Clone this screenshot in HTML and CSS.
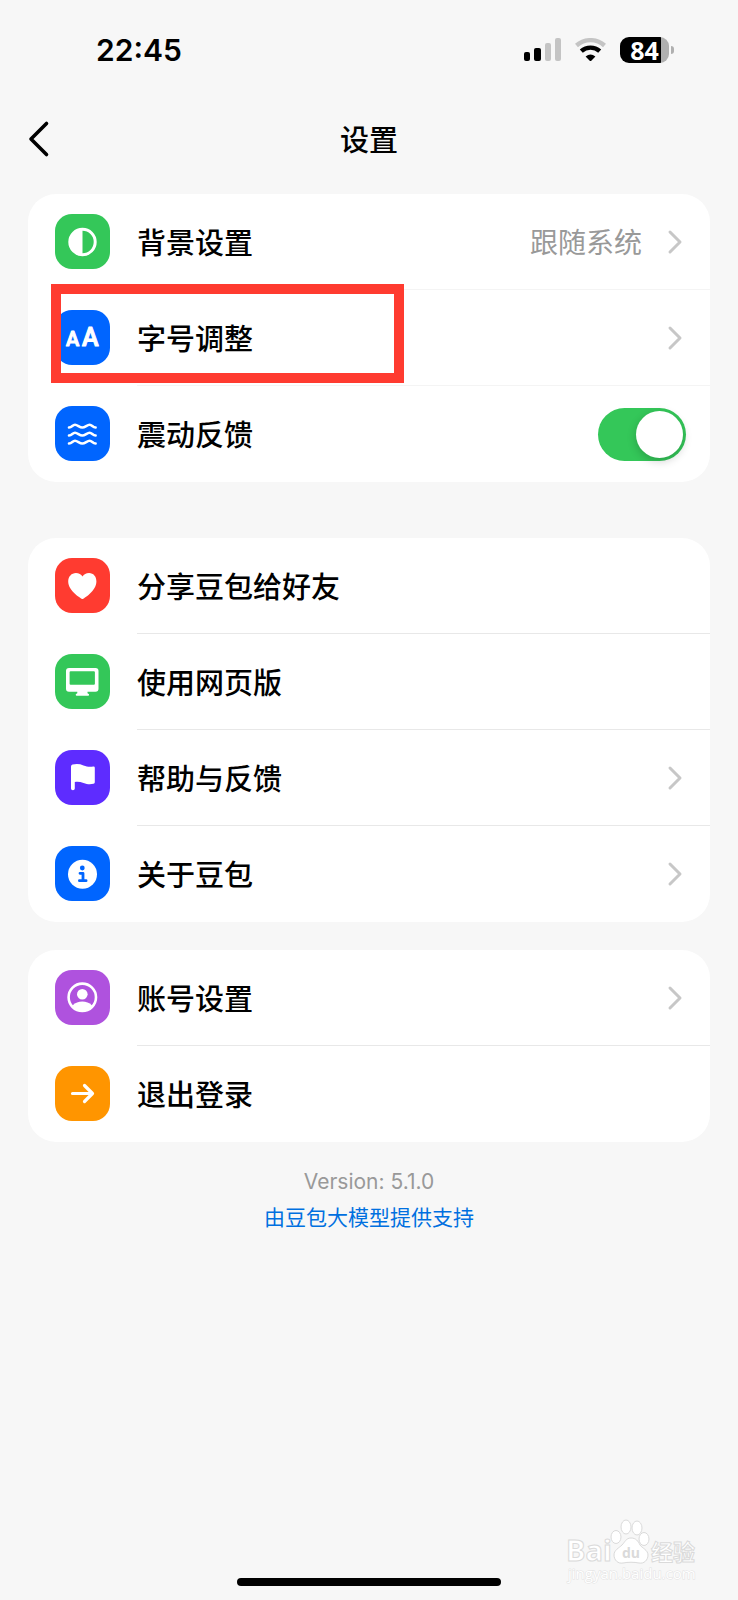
FILE: index.html
```html
<!DOCTYPE html>
<html lang="zh-CN">
<head>
<meta charset="UTF-8">
<meta name="viewport" content="width=device-width, initial-scale=1">
<title>设置</title>
<link rel="stylesheet" href="styles.css">
</head>
<body>
<div class="status-bar">
  <span class="time">22:45</span>
  <div class="status-icons">
    <svg class="signal" width="38" height="24" viewBox="0 0 38 24">
      <rect x="0" y="14" width="6" height="9" rx="2"/>
      <rect x="10" y="10" width="7" height="13" rx="2"/>
      <rect x="21" y="5" width="6" height="18" rx="2" fill="#c4c4c4"/>
      <rect x="31" y="0" width="6" height="23" rx="2" fill="#c4c4c4"/>
    </svg>
    <svg class="wifi" width="34" height="24" viewBox="0 0 34 24">
      <path d="M2.500 7.500a21 21 0 0 1 28 0" fill="none" stroke="#c4c4c4" stroke-width="4.400"/>
      <path d="M7.300 13.200a13.500 13.500 0 0 1 18.400 0" fill="none" stroke="#000" stroke-width="4.400"/>
      <path d="M11.600 18.400a8 8 0 0 1 9.800 0l-4.100 4.300q-.8.8-1.600 0z"/>
    </svg>
    <div class="battery"><span class="level">84</span></div>
  </div>
</div>

<header class="nav">
  <button class="back" aria-label="返回">
    <svg width="24" height="40" viewBox="0 0 24 40"><path d="M18.500 4.500L3 20l15.500 15.500" fill="none" stroke="#000" stroke-width="3.600" stroke-linecap="round" stroke-linejoin="round"/></svg>
  </button>
  <h1>设置</h1>
</header>

<main>
  <section class="card light">
    <button class="row">
      <span class="icon green">
        <svg viewBox="0 0 55 55"><circle cx="27.500" cy="28" r="12.700" fill="none" stroke="#fff" stroke-width="3"/><path d="M27.500 15a13 13 0 0 0 0 26z"/></svg>
      </span>
      <span class="content"><span class="label">背景设置</span><span class="value">跟随系统</span><svg class="arrow" viewBox="0 0 20 28"><path d="M4 4l10 10L4 24"/></svg></span>
    </button>
    <button class="row marked">
      <span class="icon blue">
        <svg viewBox="0 0 55 55"><g class="letters"><text x="11" y="36" font-size="20">A</text><text x="27" y="36" font-size="25">A</text></g></svg>
      </span>
      <span class="content"><span class="label">字号调整</span><svg class="arrow" viewBox="0 0 20 28"><path d="M4 4l10 10L4 24"/></svg></span>
    </button>
    <label class="row">
      <span class="icon blue">
        <svg viewBox="0 0 55 55">
          <g fill="none" stroke="#fff" stroke-width="2.600" stroke-linecap="round" stroke-linejoin="round">
            <path d="M14 21.500c3 0 3.500-2.800 6-2.800s4.500 2.800 7.300 2.800 4.800-2.800 7.300-2.800 3 2.800 6 2.800"/>
            <path d="M14 29.500c3 0 3.500-2.800 6-2.800s4.500 2.800 7.300 2.800 4.800-2.800 7.300-2.800 3 2.800 6 2.800"/>
            <path d="M14 37.500c3 0 3.500-2.800 6-2.800s4.500 2.800 7.300 2.800 4.800-2.800 7.300-2.800 3 2.800 6 2.800"/>
          </g>
        </svg>
      </span>
      <span class="content"><span class="label">震动反馈</span><input type="checkbox" class="switch" checked></span>
    </label>
  </section>

  <section class="card gap-large">
    <button class="row">
      <span class="icon red">
        <svg viewBox="0 0 55 55"><path d="M27.500 41c-1 0-14.300-8-14.300-17.500 0-5 3.400-8.500 7.700-8.500 3 0 5.200 1.500 6.600 3.500 1.400-2 3.600-3.500 6.600-3.500 4.300 0 7.300 3.500 7.300 8.500C41.400 33 28.500 41 27.500 41z"/></svg>
      </span>
      <span class="content"><span class="label">分享豆包给好友</span></span>
    </button>
    <button class="row">
      <span class="icon green">
        <svg viewBox="0 0 55 55"><path fill-rule="evenodd" d="M14 14h26.500a3 3 0 0 1 3 3v17.700a3 3 0 0 1-3 3h-8v1.500l1.200.8a1 1 0 0 1-.5 1.800H21.600a1 1 0 0 1-.5-1.800l1.200-.8v-1.500H14a3 3 0 0 1-3-3V17a3 3 0 0 1 3-3zm1.600 3.300a1 1 0 0 0-1 1v11.400a1 1 0 0 0 1 1h23.300a1 1 0 0 0 1-1V18.300a1 1 0 0 0-1-1z"/></svg>
      </span>
      <span class="content"><span class="label">使用网页版</span></span>
    </button>
    <button class="row">
      <span class="icon purple">
        <svg viewBox="0 0 55 55"><path d="M16 16.500q0-1.500 1.500-1.900c4-.9 7.500-.6 11 .9 3.500 1.400 6.500 1.700 9.800 1q1.500-.2 1.500 1.300v14.400q0 1.200-1.300 1.600c-3.500.9-6.500.5-10-.9-3-1.100-5.500-1.400-8.700-1v6.600q0 1.800-1.900 1.800T16 38.500z"/></svg>
      </span>
      <span class="content"><span class="label">帮助与反馈</span><svg class="arrow" viewBox="0 0 20 28"><path d="M4 4l10 10L4 24"/></svg></span>
    </button>
    <button class="row">
      <span class="icon blue">
        <svg viewBox="0 0 55 55"><circle cx="27.500" cy="28.300" r="14.500"/><circle cx="27.300" cy="22" r="2.400" fill="#0065ff"/><path d="M25 27.300h3v7.400M24.400 34.700h6.700" fill="none" stroke="#0065ff" stroke-width="2.800" stroke-linecap="round" stroke-linejoin="round"/></svg>
      </span>
      <span class="content"><span class="label">关于豆包</span><svg class="arrow" viewBox="0 0 20 28"><path d="M4 4l10 10L4 24"/></svg></span>
    </button>
  </section>

  <section class="card gap-small">
    <button class="row">
      <span class="icon violet">
        <svg viewBox="0 0 55 55"><circle cx="27.300" cy="27.300" r="13.700" fill="none" stroke="#fff" stroke-width="2.600"/><circle cx="27.300" cy="24.300" r="5.300"/><path d="M17.500 35.500c3-3 6-4 9.800-4s6.800 1 9.800 4c-2.300 3.500-5.800 5.500-9.800 5.500s-7.500-2-9.800-5.500z"/></svg>
      </span>
      <span class="content"><span class="label">账号设置</span><svg class="arrow" viewBox="0 0 20 28"><path d="M4 4l10 10L4 24"/></svg></span>
    </button>
    <button class="row">
      <span class="icon orange">
        <svg viewBox="0 0 55 55"><path d="M17.500 27.500h19M29.500 19.500l8 8-8 8" fill="none" stroke="#fff" stroke-width="3.200" stroke-linecap="round" stroke-linejoin="round"/></svg>
      </span>
      <span class="content"><span class="label">退出登录</span></span>
    </button>
  </section>

  <div class="about">
    <p>Version: 5.1.0</p>
    <a href="#">由豆包大模型提供支持</a>
  </div>
</main>

<div class="home-indicator"></div>

<svg class="watermark" width="140" height="70" viewBox="0 0 140 70">
  <g class="brand">
    <text x="4" y="45" font-size="29">Bai</text>
    <ellipse cx="54" cy="21" rx="5" ry="6.500"/>
    <ellipse cx="64" cy="11" rx="5" ry="7"/>
    <ellipse cx="75" cy="12" rx="5" ry="7"/>
    <ellipse cx="82" cy="23" rx="5" ry="6.500"/>
    <path d="M69 22c5 0 7 3 9 7 2 3 8 5 8 10s-4 9-9 8-11-1-16 0-9-3-9-8 5-7 8-10 4-7 9-7z"/>
    <text class="du" x="60" y="42" font-size="14">du</text>
    <text x="89" y="44" font-size="22">经验</text>
  </g>
  <text class="domain" x="6" y="63" font-size="15">jingyan.baidu.com</text>
</svg>
</body>
</html>
```

FILE: styles.css
```css
* {
  box-sizing: border-box;
}
body {
  margin: 0;
  min-height: 100vh;
  display: flex;
  flex-direction: column;
  position: relative;
  background: #f7f7f7;
  color: #000;
  font-family: Inter, "Noto Sans CJK SC", sans-serif;
}
button {
  border: none;
  background: none;
  padding: 0;
  font: inherit;
  color: inherit;
  text-align: left;
  cursor: pointer;
}

/* status bar */
.status-bar {
  height: 100px;
  padding: 0 64px 0 96px;
  display: flex;
  justify-content: space-between;
  align-items: center;
}
.time {
  font-size: 30px;
  font-weight: 600;
}
.status-icons {
  display: flex;
  align-items: center;
  gap: 12px;
}
.battery {
  display: flex;
  align-items: center;
  gap: 2px;
}
.battery::after {
  content: "";
  width: 3px;
  height: 8px;
  border-radius: 0 4px 4px 0;
  background: #b0b0b0;
}
.level {
  width: 49px;
  height: 26px;
  border-radius: 9px;
  background: linear-gradient(to right, #000 84%, #b0b0b0 84%);
  color: #fff;
  font-family: "Open Sans", sans-serif;
  font-size: 25px;
  font-weight: 700;
  line-height: 26px;
  text-align: center;
}

/* title */
.nav {
  height: 78px;
  padding: 0 28px;
  display: grid;
  grid-template-columns: 40px 1fr 40px;
  align-items: center;
}
.back svg {
  display: block;
}
.nav h1 {
  margin: 0;
  padding-bottom: 2px;
  font-size: 29px;
  font-weight: 500;
  text-align: center;
}

/* cards */
main {
  flex: 1;
  padding: 16px 28px;
}
.card {
  border-radius: 28px;
  background: #fff;
}
.gap-large {
  margin-top: 56px;
}
.gap-small {
  margin-top: 28px;
}
.row {
  width: 100%;
  height: 96px;
  padding-left: 27px;
  display: flex;
  align-items: center;
  gap: 27px;
  position: relative;
  cursor: pointer;
}
.icon {
  width: 55px;
  height: 55px;
  flex: none;
  margin-bottom: 1px;
  border-radius: 17px;
}
.icon svg {
  display: block;
  fill: #fff;
}
.letters {
  font-family: Roboto, sans-serif;
  font-weight: 500;
  stroke: #fff;
  stroke-linejoin: round;
}
.green { background: #34c759; }
.blue { background: #0065ff; }
.red { background: #ff3b30; }
.purple { background: #5e2cff; }
.violet { background: #af52de; }
.orange { background: #ff9500; }

.content {
  flex: 1;
  height: 100%;
  padding-right: 24px;
  display: flex;
  align-items: center;
  box-shadow: inset 0 -1px #e8e8e8;
}
.light .content {
  box-shadow: inset 0 -1px #f4f4f4;
}
.row:last-child .content {
  box-shadow: none;
}
.label {
  flex: 1;
  padding-bottom: 3px;
  font-size: 29px;
  font-weight: 500;
}
.value {
  margin-right: 24px;
  padding-bottom: 3px;
  color: #999;
  font-size: 28px;
}
.arrow {
  width: 20px;
  height: 28px;
  fill: none;
  stroke: #c7c7c7;
  stroke-width: 3;
  stroke-linecap: round;
  stroke-linejoin: round;
}
.marked::after {
  content: "";
  box-sizing: border-box;
  position: absolute;
  left: 23px;
  top: -6px;
  width: 353px;
  height: 99px;
  border: 10px solid #ff3b30;
}

/* toggle */
.switch {
  appearance: none;
  margin: 0;
  width: 88px;
  height: 53px;
  padding: 3px;
  display: flex;
  border-radius: 27px;
  background: #ddd;
  cursor: pointer;
}
.switch::before {
  content: "";
  width: 47px;
  height: 47px;
  border-radius: 50%;
  background: #fff;
  box-shadow: 0 3px 10px rgba(0,0,0,0.2);
}
.switch:checked {
  justify-content: flex-end;
  background: #34c759;
}

.about {
  padding-top: 22px;
  font-size: 21px;
  line-height: 36px;
  text-align: center;
}
.about p {
  margin: 0;
  color: #999;
}
.about a {
  color: #0070e0;
  text-decoration: none;
}

.home-indicator {
  width: 264px;
  height: 8px;
  margin: 0 auto 14px;
  border-radius: 4px;
  background: #000;
}

.watermark {
  position: absolute;
  right: 36px;
  bottom: 14px;
  font-family: "Open Sans", "Noto Sans CJK SC", sans-serif;
  font-weight: 700;
}
.brand {
  fill: #fff;
  stroke: #dadada;
  stroke-width: 1;
}
.du {
  fill: #dadada;
  stroke: none;
}
.domain {
  fill: #fff;
  stroke: #e2e2e2;
  stroke-width: 1;
  font-weight: 400;
  paint-order: stroke;
}
```
